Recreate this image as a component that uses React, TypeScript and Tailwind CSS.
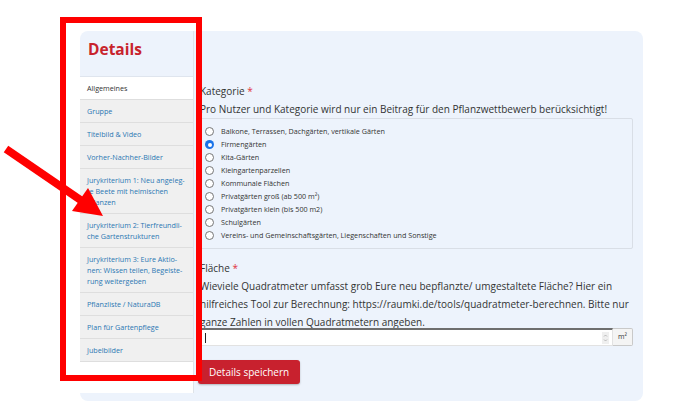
const kategorien = [
  "Balkone, Terrassen, Dachgärten, vertikale Gärten",
  "Firmengärten",
  "Kita-Gärten",
  "Kleingartenparzellen",
  "Kommunale Flächen",
  "Privatgärten groß (ab 500 m²)",
  "Privatgärten klein (bis 500 m2)",
  "Schulgärten",
  "Vereins- und Gemeinschaftsgärten, Liegenschaften und Sonstige",
];

const navItems: { lines: string[]; active?: boolean }[] = [
  { lines: ["Allgemeines"], active: true },
  { lines: ["Gruppe"] },
  { lines: ["Titelbild & Video"] },
  { lines: ["Vorher-Nachher-Bilder"] },
  { lines: ["Jurykriterium 1: Neu angeleg-", "te Beete mit heimischen", "Pflanzen"] },
  { lines: ["Jurykriterium 2: Tierfreundli-", "che Gartenstrukturen"] },
  { lines: ["Jurykriterium 3: Eure Aktio-", "nen: Wissen teilen, Begeiste-", "rung weitergeben"] },
  { lines: ["Pflanzliste / NaturaDB"] },
  { lines: ["Plan für Gartenpflege"] },
  { lines: ["Jubelbilder"] },
];

function Radio({ checked }: { checked?: boolean }) {
  if (checked) {
    return (
      <span className="flex h-[9px] w-[9px] shrink-0 items-center justify-center rounded-full bg-[#1a73e8]">
        <span className="h-[4px] w-[4px] rounded-full bg-white" />
      </span>
    );
  }
  return <span className="h-[9px] w-[9px] shrink-0 rounded-full border border-[#767676] bg-white" />;
}

function Sidebar() {
  return (
    <div className="flex w-[114px] shrink-0 flex-col border-r border-[#dfe3e8]">
      <div className="h-[46px] border-b border-[#dfe5ee] pl-[8px] pt-[8px]">
        <h1 className="text-[15.5px] font-bold leading-[20px] text-[#c8232c]">Details</h1>
      </div>
      <ul className="flex-1 bg-white">
        {navItems.map((item) => (
          <li
            key={item.lines[0]}
            className={
              item.active
                ? "border-b border-[#dedede] bg-white px-[7px] py-[5.5px] text-[7.2px] leading-[11px] text-[#333]"
                : "border-b border-[#dedede] bg-[#f0f0f0] px-[7px] py-[5.5px] text-[7.2px] leading-[11px] text-[#2b77b3]"
            }
          >
            {item.lines.map((l) => (
              <div key={l}>{l}</div>
            ))}
          </li>
        ))}
      </ul>
    </div>
  );
}

function Content() {
  return (
    <div className="flex-1 pl-[6px] pr-[10px] pt-[50px] text-[10px] text-[#333]">
      <div className="leading-[20px]">
        Kategorie <span className="text-[#e0323c]">*</span>
      </div>
      <div className="leading-[17px]">
        Pro Nutzer und Kategorie wird nur ein Beitrag für den Pflanzwettbewerb berücksichtigt!
      </div>
      <div className="rounded-[2px] border border-[#d9dee6] px-[4px] py-[6px]">
        {kategorien.map((k, i) => (
          <label key={k} className="flex h-[13px] items-center gap-[7px] text-[7.2px] text-[#333]">
            <Radio checked={i === 1} />
            <span>{k}</span>
          </label>
        ))}
      </div>

      <div className="mt-[10px] leading-[18px]">
        Fläche <span className="text-[#e0323c]">*</span>
      </div>
      <div className="leading-[18px]">
        Wieviele Quadratmeter umfasst grob Eure neu bepflanzte/ umgestaltete Fläche? Hier ein
        <br />
        hilfreiches Tool zur Berechnung: https://raumki.de/tools/quadratmeter-berechnen. Bitte nur
        <br />
        ganze Zahlen in vollen Quadratmetern angeben.
      </div>
      <div className="-mt-[3px] flex h-[18px]">
        <div className="flex flex-1 items-center border border-[#e2e2e2] border-t-2 border-t-[#6e6e6e] border-l-[#6e6e6e] bg-white pl-[4px] pr-[3px]">
          <span className="h-[10px] w-px bg-[#222]" />
          <span className="ml-auto flex h-[12px] w-[7px] flex-col items-center justify-center bg-[#efefef] text-[#aaa]">
            <svg width="5" height="10" viewBox="0 0 5 10" fill="none" stroke="currentColor" strokeWidth="0.8">
              <path d="M1 3.5 2.5 2 4 3.5M1 6.5 2.5 8 4 6.5" />
            </svg>
          </span>
        </div>
        <div className="flex w-[20px] items-center justify-center rounded-r-[2px] border border-l-0 border-[#c9c9c9] bg-[#f4f4f4] text-[7px] text-[#333]">
          m²
        </div>
      </div>

      <button className="-ml-[2px] mt-[14px] h-[24px] rounded-[3px] bg-[#c8212e] px-[11px] text-[10px] text-white shadow-[0_1px_2px_rgba(0,0,0,0.25)]">
        Details speichern
      </button>
    </div>
  );
}

export default function App() {
  return (
    <div className="relative h-[411px] w-[683px] overflow-hidden bg-white font-['Open_Sans',sans-serif]">
      <div className="ml-[80px] mt-[31px] flex h-[370px] w-[563px] rounded-[8px] bg-[#edf3fc] pb-[8px]">
        <Sidebar />
        <Content />
      </div>

      {/* annotation overlay */}
      <div className="pointer-events-none absolute left-[60px] top-[17px] h-[364px] w-[142px] border-[6px] border-[#ff0000]" />
      <svg className="pointer-events-none absolute left-0 top-0" width="683" height="411">
        <line x1="6" y1="149" x2="82" y2="201" stroke="#ff0000" strokeWidth="8" />
        <polygon points="103,216 72,211 88,188" fill="#ff0000" />
      </svg>
    </div>
  );
}
